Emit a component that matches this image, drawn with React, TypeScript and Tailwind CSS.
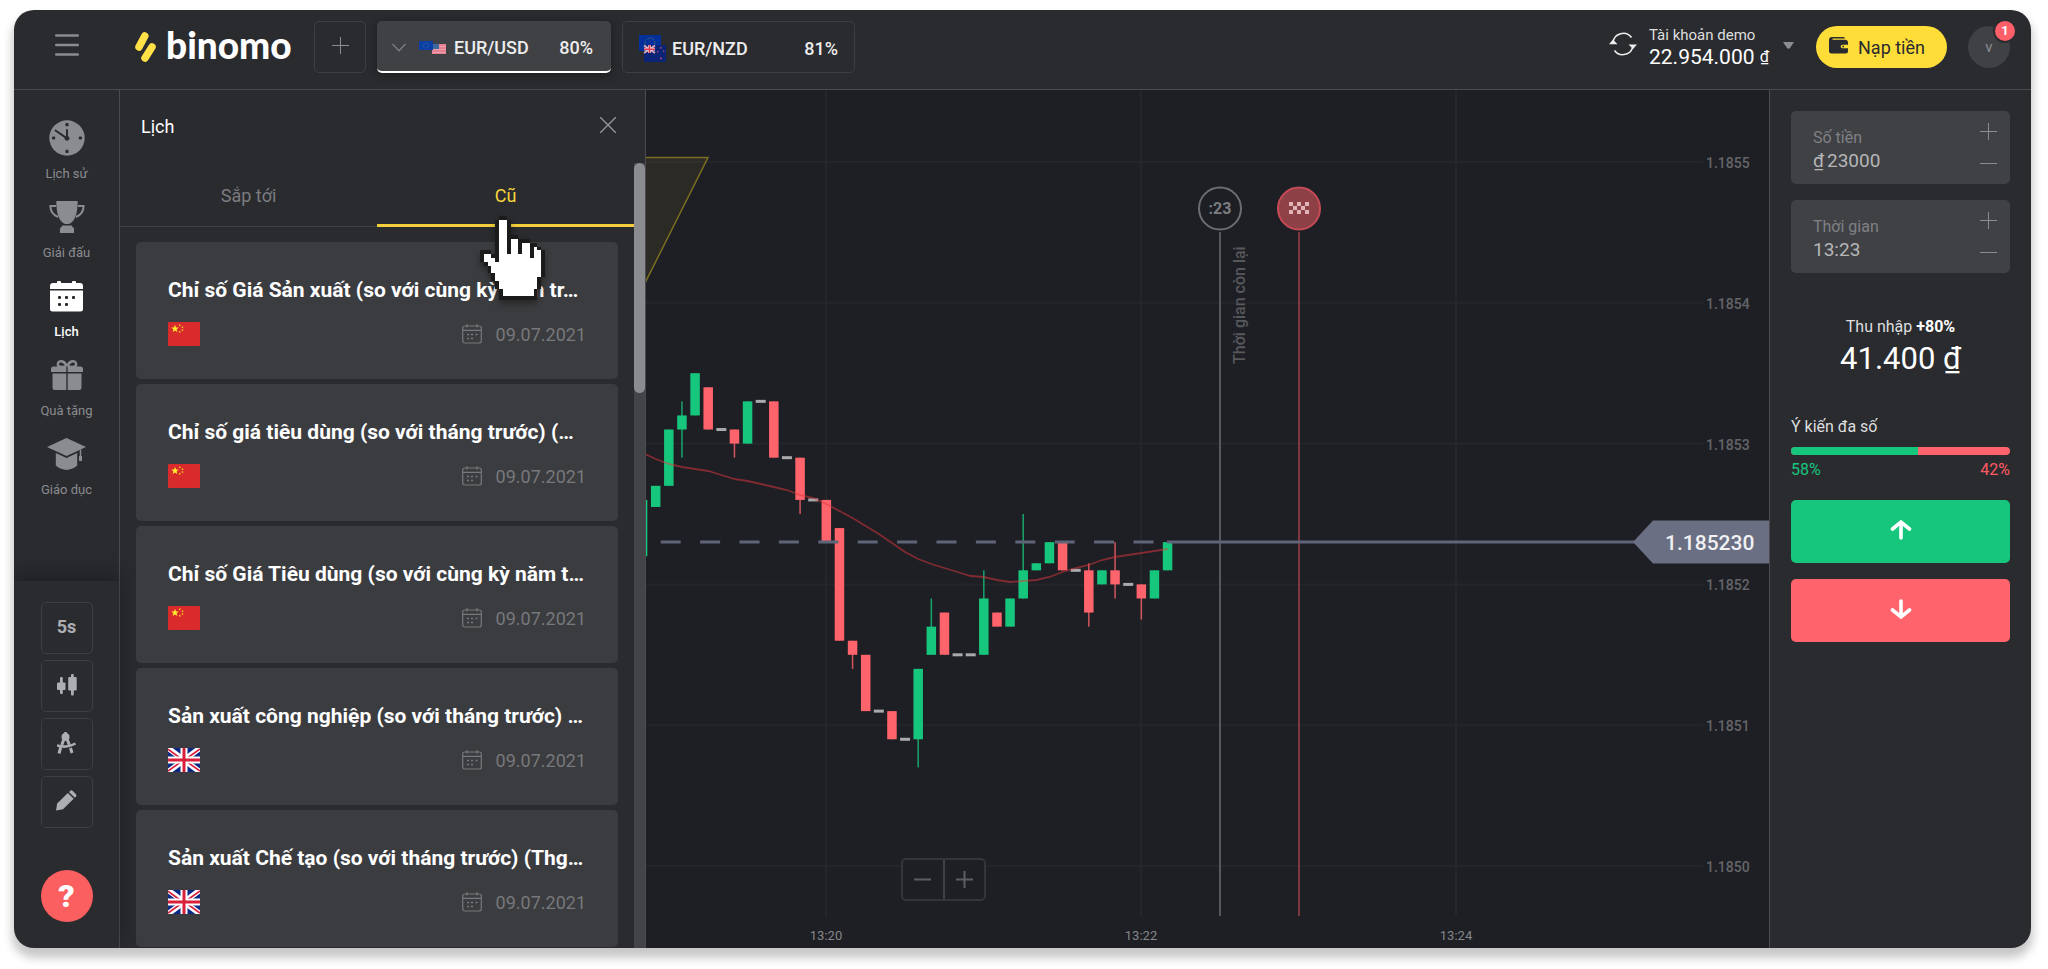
import { useState, type ReactNode } from "react";

type CalendarEvent = { title: string; flag: "cn" | "gb"; date: string };

const events: CalendarEvent[] = [
  { title: "Chỉ số Giá Sản xuất (so với cùng kỳ năm tr…", flag: "cn", date: "09.07.2021" },
  { title: "Chỉ số giá tiêu dùng (so với tháng trước) (…", flag: "cn", date: "09.07.2021" },
  { title: "Chỉ số Giá Tiêu dùng (so với cùng kỳ năm t…", flag: "cn", date: "09.07.2021" },
  { title: "Sản xuất công nghiệp (so với tháng trước) …", flag: "gb", date: "09.07.2021" },
  { title: "Sản xuất Chế tạo (so với tháng trước) (Thg…", flag: "gb", date: "09.07.2021" },
];

// [open, close, high, low] in points above 1.18500, one candle every 5 seconds
const candles: number[][] = [
  [22, 26, 26, 22],
  [25.5, 27, 27, 25.5],
  [27, 31, 31, 27],
  [31, 32, 33, 29],
  [32, 35, 35, 32],
  [34, 31, 34, 31],
  [31, 31, 31, 31],
  [31, 30, 31, 29],
  [30, 33, 33, 30],
  [33, 33, 33, 33],
  [33, 29, 33, 29],
  [29, 29, 29, 29],
  [29, 26, 29, 25],
  [26, 26, 26, 26],
  [26, 23, 26, 23],
  [24, 16, 24, 16],
  [16, 15, 16, 14],
  [15, 11, 15, 11],
  [11, 11, 11, 11],
  [11, 9, 11, 9],
  [9, 9, 9, 9],
  [9, 14, 14, 7],
  [15, 17, 19, 15],
  [18, 15, 18, 15],
  [15, 15, 15, 15],
  [15, 15, 15, 15],
  [15, 19, 21, 15],
  [18, 17, 18, 17],
  [17, 19, 19, 17],
  [19, 21, 25, 19],
  [21, 21.5, 21.5, 21],
  [21.5, 23, 23, 21.5],
  [23, 21, 23, 21],
  [21, 21, 21, 21],
  [21, 18, 21.5, 17],
  [20, 21, 21, 20],
  [21, 20, 23, 19],
  [20, 20, 20, 20],
  [20, 19, 20, 17.5],
  [19, 21, 21, 19],
  [21, 23, 23, 21],
];

const movingAverage = [
  363, 369, 374, 377, 379, 381, 385, 389, 391, 394, 397, 400, 405, 408, 414, 421, 428, 436, 444, 453, 462,
  469, 474, 478, 482, 486, 487, 490, 492, 491, 490, 487, 482, 478, 475, 470, 467, 465, 463, 461, 459,
];

const priceY = (points: number) => 776 - points * 14.08;
const candleX = (index: number) => 9.7 + (index - 1) * 13.125;

const cursorRows = [
  ".....XX..........",
  "....XooX.........",
  "....XooX.........",
  "....XooX.........",
  "....XooX.........",
  "....XooXXX.......",
  "....XooXooXXX....",
  "....XooXooXooXX..",
  "....XooXooXooXoX.",
  "XXX.XooXooXooXooX",
  "XooXXooooooooXooX",
  "XoooXoooooooooooX",
  ".XooooooooooooooX",
  "..XoooooooooooooX",
  "..XoooooooooooooX",
  "...XooooooooooooX",
  "...XoooooooooooX.",
  "....XooooooooooX.",
  "....XooooooooooX.",
  ".....XooooooooX..",
  ".....XooooooooX..",
  ".....XXXXXXXXXX..",
];

function HandCursor() {
  return (
    <svg
      viewBox="0 0 17 22"
      shapeRendering="crispEdges"
      aria-hidden="true"
      className="pointer-events-none absolute top-[126px] left-[360px] z-10 w-[65px] drop-shadow-[0_4px_3px_rgba(0,0,0,0.35)]"
    >
      {cursorRows.map((row, y) =>
        row.split("").map((cell, x) =>
          cell === "." ? null : (
            <rect key={`${x}-${y}`} x={x} y={y} width="1" height="1" fill={cell === "X" ? "#1b1b1c" : "#fff"} />
          )
        )
      )}
    </svg>
  );
}

function FlagCN() {
  return (
    <svg viewBox="0 0 32 24" className="h-6 w-8 rounded-[1px]" role="img" aria-label="CN">
      <rect width="32" height="24" fill="#d92b2b" />
      <path d="M7 2.8l1 2.7 2.8.1-2.2 1.7.8 2.8L7 8.500l-2.400 1.600.8-2.800L3.200 5.600 6 5.500z" fill="#ffee2e" />
      <g fill="#f6c62c">
        <rect x="11" y="2.500" width="1.500" height="1.500" />
        <rect x="13.700" y="4.500" width="1.500" height="1.500" />
        <rect x="13.700" y="7.300" width="1.500" height="1.500" />
        <rect x="11" y="9" width="1.500" height="1.500" />
      </g>
    </svg>
  );
}

function FlagGB() {
  return (
    <svg viewBox="0 0 32 24" className="h-6 w-8" role="img" aria-label="GB">
      <rect width="32" height="24" fill="#0a2a86" />
      <path d="M0 0L32 24M32 0L0 24" stroke="#fff" strokeWidth="5.500" />
      <path d="M0 1.200L12 10M20 14.500L32 23M32 1L20 9.500M12 14.500L0 23" stroke="#d9203a" strokeWidth="1.600" />
      <path d="M16 0V24M0 12H32" stroke="#fff" strokeWidth="7" />
      <path d="M16 0V24M0 12H32" stroke="#d9203a" strokeWidth="3" />
    </svg>
  );
}

function FlagsEurUsd() {
  return (
    <svg viewBox="0 0 27 14" className="h-[14px] w-[27px]" aria-hidden="true">
      <rect x="13" y="3" width="14" height="10" fill="#e77f92" />
      <path d="M13 5.500H27M13 8.500H27M13 11.500H27" stroke="#eba0ad" strokeWidth="1" />
      <rect x="13" y="3" width="7" height="5" fill="#3b6a9c" />
      <rect width="14" height="9" fill="#0b3fa6" />
      <circle cx="7" cy="4.500" r="2.600" fill="none" stroke="#3d6a9a" strokeWidth="1" strokeDasharray="1 1" />
    </svg>
  );
}

function FlagsEurNzd() {
  return (
    <svg viewBox="0 0 27 27" className="h-[27px] w-[27px]" aria-hidden="true">
      <rect width="22" height="16" fill="#04309c" />
      <circle cx="11" cy="8" r="5" fill="none" stroke="#5d7658" strokeWidth="1" strokeDasharray="1.300 1.300" />
      <rect x="5" y="10" width="22" height="17" fill="#0b2478" />
      <path d="M5 10.500L16 18M16 10.500L5 18" stroke="#dba9bb" strokeWidth="1.800" />
      <path d="M10.500 10V18M5 14.200H16" stroke="#f2dfe4" strokeWidth="2.800" />
      <path d="M10.500 10V18M5 14.200H16" stroke="#e0394f" strokeWidth="1.600" />
      <g fill="#b0486e">
        <rect x="21" y="12" width="1.600" height="1.600" />
        <rect x="18" y="16" width="1.400" height="1.400" />
        <rect x="24" y="15.500" width="1.400" height="1.400" />
        <rect x="21" y="22.500" width="1.800" height="1.800" />
      </g>
    </svg>
  );
}

function ClockIcon() {
  return (
    <svg viewBox="0 0 36 36" className="h-9 w-9" aria-hidden="true">
      <circle cx="18" cy="18" r="17.700" fill="currentColor" />
      <g fill="#2a2b2f">
        <rect x="16.400" y="3" width="3.200" height="3.200" rx="1" />
        <rect x="16.400" y="29.800" width="3.200" height="3.200" rx="1" />
        <rect x="3" y="16.400" width="3.200" height="3.200" rx="1" />
        <rect x="29.800" y="16.400" width="3.200" height="3.200" rx="1" />
        <circle cx="18" cy="18.300" r="2.400" />
      </g>
      <path d="M18 18V10M18 18.300L6.500 10.500" stroke="#2a2b2f" strokeWidth="2" strokeLinecap="round" />
    </svg>
  );
}

function TrophyIcon() {
  return (
    <svg viewBox="0 0 36 32" className="h-8 w-9" aria-hidden="true">
      <path d="M7.300 0H28.700C28.700 10 27 18 22.500 21.500C20 23.600 16 23.600 13.500 21.500C9 18 7.300 10 7.300 0Z" fill="currentColor" />
      <path d="M13.500 24.500H22.500L25 27.500V32H11V27.500Z" fill="currentColor" />
      <path d="M7 5H1.400C1.400 10 4 14 9 16M29 5H34.600C34.600 10 32 14 27 16" fill="none" stroke="currentColor" strokeWidth="2" />
    </svg>
  );
}

function CalendarIcon() {
  return (
    <svg viewBox="0 0 33 31" className="h-[31px] w-[33px]" aria-hidden="true">
      <path d="M7 2V1a1 1 0 0 1 1-1h2a1 1 0 0 1 1 1v1h11V1a1 1 0 0 1 1-1h2a1 1 0 0 1 1 1v1h4a3 3 0 0 1 3 3v3H0V5a3 3 0 0 1 3-3Z" fill="currentColor" />
      <path d="M0 9.500H33V28a2.500 2.500 0 0 1-2.500 2.500H2.500A2.500 2.500 0 0 1 0 28Z" fill="currentColor" />
      <g fill="#2a2b2f">
        <rect x="8" y="15" width="3" height="3" rx="1" />
        <rect x="15" y="15" width="3" height="3" rx="1" />
        <rect x="22" y="15" width="3" height="3" rx="1" />
        <rect x="8" y="22" width="3" height="3" rx="1" />
        <rect x="15" y="22" width="3" height="3" rx="1" />
      </g>
    </svg>
  );
}

function GiftIcon() {
  return (
    <svg viewBox="0 0 32 30" className="h-[30px] w-8" aria-hidden="true">
      <path d="M15 6.500C10 7.500 6.800 6.500 6.800 4.200C6.800 1.500 9.500.8 11.500 1.500C13.500 2.200 15 4.500 15.500 6.500M17 6.500C22 7.500 25.200 6.500 25.200 4.200C25.200 1.500 22.500.8 20.500 1.500C18.500 2.200 17 4.500 16.500 6.500" fill="none" stroke="currentColor" strokeWidth="2.400" />
      <path d="M0 12V9a2.500 2.500 0 0 1 2.500-2.500H15.300V12ZM16.700 12V6.500H29.500A2.500 2.500 0 0 1 32 9v3Z" fill="currentColor" />
      <path d="M1.500 13.500H15.300V30H4A2.500 2.500 0 0 1 1.500 27.500ZM16.700 13.500H30.500V27.500A2.500 2.500 0 0 1 28 30H16.700Z" fill="currentColor" />
    </svg>
  );
}

function EducationIcon() {
  return (
    <svg viewBox="0 0 39 32" className="h-8 w-[39px]" aria-hidden="true">
      <path d="M19.500 0L39 9L19.500 18L0 9Z" fill="currentColor" />
      <path d="M8.800 15L19.500 20L30.200 15V27.500C27 30.500 23 31.500 19.500 32C16 31.500 12 30.500 8.800 27.500Z" fill="currentColor" />
      <path d="M33.500 11.500V19" stroke="currentColor" strokeWidth="1.500" />
      <rect x="32" y="18" width="3" height="5" fill="currentColor" />
    </svg>
  );
}

function SmallCalendarIcon() {
  return (
    <svg viewBox="0 0 20 20" className="h-5 w-5" fill="none" stroke="currentColor" aria-hidden="true">
      <rect x="0.700" y="2" width="18.600" height="17" rx="2" strokeWidth="1.200" />
      <path d="M1 6.300H19M5 0V3.500M15 0V3.500" strokeWidth="1.200" />
      <path d="M5 10.500H7M9 10.500H11M13.500 10.500H15.500M5 14.500H7M9 14.500H11" strokeWidth="1.600" />
    </svg>
  );
}

function Plus({ className }: { className: string }) {
  return (
    <svg viewBox="0 0 17 17" className={className} stroke="currentColor" aria-hidden="true">
      <path d="M8.500 0V17M0 8.500H17" />
    </svg>
  );
}

function Minus({ className }: { className: string }) {
  return (
    <svg viewBox="0 0 17 17" className={className} stroke="currentColor" aria-hidden="true">
      <path d="M0 8.500H17" />
    </svg>
  );
}

const navItems: { label: string; icon: ReactNode; active?: boolean }[] = [
  { label: "Lịch sử", icon: <ClockIcon /> },
  { label: "Giải đấu", icon: <TrophyIcon /> },
  { label: "Lịch", icon: <CalendarIcon />, active: true },
  { label: "Quà tặng", icon: <GiftIcon /> },
  { label: "Giáo dục", icon: <EducationIcon /> },
];

function Header() {
  return (
    <header className="flex h-20 shrink-0 items-center border-b border-[#4a4b4e] pr-[21px] pb-[5px]">
      <div className="flex w-[105px] shrink-0 justify-center">
        <button type="button" aria-label="Menu" className="mb-1 text-[#8b8c90]">
          <svg viewBox="0 0 24 22" className="h-[22px] w-6" stroke="currentColor" strokeWidth="2.400" strokeLinecap="round" aria-hidden="true">
            <path d="M1.200 1.500H22.800M1.200 11H22.800M1.200 20.500H22.800" />
          </svg>
        </button>
      </div>

      <a href="#" className="ml-4 flex w-[179px] shrink-0 items-center gap-[10px]">
        <svg viewBox="0 0 21 30" className="h-[30px] w-[21px]" stroke="#ffe047" strokeWidth="7.500" strokeLinecap="round" aria-hidden="true">
          <path d="M9.800 4L4 15M17 15L10 26" />
        </svg>
        <span className="mb-1 font-['Lato'] text-[37px] leading-[38px] font-black text-white">binomo</span>
      </a>

      <div className="flex gap-[11px]">
        <button type="button" aria-label="Thêm" className="flex h-[52px] w-[52px] items-center justify-center rounded-[5px] border border-[#3d3e42] pb-1 text-[#8b8c90]">
          <Plus className="h-[17px] w-[17px]" />
        </button>
        <button type="button" className="flex h-[52px] w-[234px] items-center overflow-hidden rounded-[5px] border-b-2 border-white bg-[#404144] pt-[3px] pr-[18px] pl-[15px] text-[18px] font-medium text-[#ededee] shadow-[0_2px_10px_rgba(0,0,0,0.35)]">
          <svg viewBox="0 0 14 9" className="h-[9px] w-[14px]" fill="none" stroke="#7b7c80" strokeWidth="1.500" aria-hidden="true">
            <path d="M.5 1L7 7.700L13.500 1" />
          </svg>
          <span className="ml-[13px] flex w-[35px]">
            <FlagsEurUsd />
          </span>
          EUR/USD
          <span className="ml-auto">80%</span>
        </button>
        <button type="button" className="flex h-[52px] w-[233px] items-center rounded-[5px] border border-[#3d3e42] px-4 pt-[3px] text-[18px] font-medium text-[#ededee]">
          <span className="flex w-[33px]">
            <FlagsEurNzd />
          </span>
          EUR/NZD
          <span className="ml-auto">81%</span>
        </button>
      </div>

      <div className="ml-auto flex items-center">
        <button type="button" aria-label="Làm mới" className="mr-3 mb-[6px] text-[#ededee]">
          <svg viewBox="0 0 28 24" className="h-6 w-7" fill="none" stroke="currentColor" strokeWidth="1.600" aria-hidden="true">
            <path d="M4 10.500A10.300 10.300 0 0 1 22.500 5.500M24 13.500A10.300 10.300 0 0 1 5.500 18.500" />
            <path d="M0 12.300L4 7.500L8.500 12.300Z" fill="currentColor" stroke="none" />
            <path d="M19.500 12.500L24 17L28 12.500Z" fill="currentColor" stroke="none" />
          </svg>
        </button>
        <button type="button" className="flex items-center text-left">
          <span className="flex w-[134px] flex-col">
            <span className="text-[15px] leading-5 text-[#dededf]">Tài khoản demo</span>
            <span className="text-[21px] leading-6 text-white">
              22.954.000 <span className="align-[2px] text-[16px] leading-4">₫</span>
            </span>
          </span>
          <svg viewBox="0 0 11 7" className="mb-1 h-[7px] w-[11px]" fill="#8b8c90" aria-hidden="true">
            <path d="M0 0H11L7 6Q5.500 7.500 4 6Z" />
          </svg>
        </button>
        <button type="button" className="ml-[22px] flex h-[42px] w-[131px] items-center gap-[10px] rounded-full bg-[#ffdd38] pl-[13px] text-[18px] text-[#2a2b2f]">
          <svg viewBox="0 0 19 17" className="mb-1 h-[17px] w-[19px]" aria-hidden="true">
            <path d="M3 0H14.500A1.500 1.500 0 0 1 16 1.500H3.500V2.700H16A3 3 0 0 1 19 5.500V14A2.500 2.500 0 0 1 16.500 16.500H2.500A2.500 2.500 0 0 1 0 14V3A3 3 0 0 1 3 0Z" fill="#2a2b2f" />
            <path d="M13.500 7.700H19V11.300H13.500A1.800 1.800 0 0 1 13.500 7.700Z" fill="#ffdd38" />
            <circle cx="14.200" cy="9.500" r="0.900" fill="#2a2b2f" />
          </svg>
          Nạp tiền
        </button>
        <button type="button" className="relative ml-[21px] flex h-[42px] w-[42px] items-center justify-center rounded-full bg-[#404144] text-[15px] text-[#8b8c90]">
          v
          <span className="absolute -top-[7px] -right-[7px] flex h-6 w-6 items-center justify-center rounded-full border-2 border-[#2a2b2f] bg-[#ff5f69] text-[13px] font-bold text-white">
            1
          </span>
        </button>
      </div>
    </header>
  );
}

function ToolButton({ label, children }: { label: string; children: ReactNode }) {
  return (
    <button
      type="button"
      aria-label={label}
      className="flex h-[52px] w-[52px] items-center justify-center rounded-[5px] border border-[#3d3e42] pb-[3px] text-[18px] font-bold text-[#adaeb1]"
    >
      {children}
    </button>
  );
}

function Sidebar() {
  return (
    <aside className="flex w-[106px] shrink-0 flex-col border-r border-[#4a4b4e]">
      <nav className="flex flex-1 flex-col gap-[13px] pt-7">
        {navItems.map((item) => (
          <a
            key={item.label}
            href="#"
            className={`flex flex-col items-center gap-[6px] text-[13px] leading-5 ${item.active ? "font-medium text-white" : "text-[#8b8c90]"}`}
          >
            <span className="flex h-10 items-center">{item.icon}</span>
            {item.label}
          </a>
        ))}
      </nav>

      <div className="flex flex-col items-center gap-[6px] pt-[21px] pb-[26px] shadow-[0_-6px_20px_rgba(0,0,0,0.3)]">
        <ToolButton label="5s">5s</ToolButton>
        <ToolButton label="Loại biểu đồ">
          <svg viewBox="0 0 20 22" className="h-[22px] w-5" fill="currentColor" aria-hidden="true">
            <rect x="0" y="8.500" width="8.500" height="7.500" rx="1" />
            <rect x="3" y="3" width="2.800" height="17" rx="1" />
            <rect x="11.200" y="3" width="8.500" height="13.500" rx="1" />
            <rect x="14" y="0" width="2.800" height="21.500" rx="1" />
          </svg>
        </ToolButton>
        <ToolButton label="Chỉ báo">
          <svg viewBox="0 0 20 22" className="h-[22px] w-5" fill="none" stroke="currentColor" aria-hidden="true">
            <circle cx="8.500" cy="5" r="4" fill="currentColor" stroke="none" />
            <path d="M8.500 0V3" strokeWidth="2.500" />
            <path d="M6.500 8L4.800 13M3.800 15L2 21.500M10.500 8L12.300 13M13.500 16L15 21" strokeWidth="3" />
            <path d="M0 13.500Q10 16.500 18.500 11.500" strokeWidth="2.500" />
          </svg>
        </ToolButton>
        <ToolButton label="Vẽ">
          <svg viewBox="0 0 21 21" className="h-[21px] w-[21px]" fill="currentColor" aria-hidden="true">
            <path d="M0 20.500L1.200 13.500L11.800 3L17.700 8.800L7 19.300Z" />
            <path d="M13 1.900L14.300.7Q15.300-.2 16.500.7L20 4.200Q20.900 5.300 20 6.500L18.800 7.700Z" />
          </svg>
        </ToolButton>
        <button type="button" aria-label="Trợ giúp" className="mt-9 flex h-[52px] w-[52px] items-center justify-center rounded-full bg-[#fb5f60] text-[32px] font-black text-white">
          ?
        </button>
      </div>
    </aside>
  );
}

function CalendarPanel() {
  const [tab, setTab] = useState("old");

  return (
    <section className="relative flex w-[526px] shrink-0 flex-col border-r border-[#4a4b4e]" aria-labelledby="calendar-title">
      <div className="flex h-[73px] shrink-0 items-center justify-between pr-[29px] pl-[21px]">
        <h2 id="calendar-title" className="text-[18px] text-white">
          Lịch
        </h2>
        <button type="button" aria-label="Đóng" className="mb-[3px] text-[#97989c]">
          <svg viewBox="0 0 16 16" className="h-4 w-4" stroke="currentColor" strokeWidth="1.300" aria-hidden="true">
            <path d="M0 0L16 16M16 0L0 16" />
          </svg>
        </button>
      </div>

      <div className="flex min-h-0 flex-1">
        <div className="flex-1 overflow-hidden">
          <div className="flex h-16" role="tablist">
            {[
              { id: "next", label: "Sắp tới" },
              { id: "old", label: "Cũ" },
            ].map((item) => (
              <button
                key={item.id}
                type="button"
                role="tab"
                aria-selected={tab === item.id}
                onClick={() => setTab(item.id)}
                className={`flex-1 text-[18px] ${tab === item.id ? "border-b-3 border-[#f2cf3a] pt-[3px] text-[#f6d53c]" : "border-b border-[#404144] pt-px text-[#7b7c80]"}`}
              >
                {item.label}
              </button>
            ))}
          </div>

          <ul className="flex flex-col gap-[5px] px-4 pt-[15px]">
            {events.map((event) => (
              <li key={event.title} className="rounded-[5px] bg-[#3b3c3f] px-8 pt-8 pb-[33px]">
                <h3 className="text-[21px] leading-8 font-bold whitespace-nowrap text-white">{event.title}</h3>
                <div className="mt-4 flex h-6 items-center justify-between">
                  {event.flag === "cn" ? <FlagCN /> : <FlagGB />}
                  <span className="flex items-center gap-[14px] text-[18px] text-[#77787b]">
                    <SmallCalendarIcon />
                    {event.date}
                  </span>
                </div>
              </li>
            ))}
          </ul>
        </div>
        <div className="w-[11px] shrink-0 bg-[#434447]">
          <div className="h-[230px] rounded-full bg-[#8b8c90]" />
        </div>
      </div>

      <HandCursor />
    </section>
  );
}

function Chart() {
  return (
    <main className="relative min-w-0 flex-1 bg-[#1e1f24]">
      <svg viewBox="0 0 1123 858" preserveAspectRatio="xMaxYMin slice" className="h-full w-full" role="img" aria-label="EUR/USD">
        {/* grid */}
        {[50, 40, 30, 20, 10, 0].map((points) => (
          <g key={points}>
            <path d={`M0 ${priceY(points)}H1057`} stroke="#25262a" strokeWidth="2" />
            <text x="1060" y={priceY(points) + 6} fill="#646569" fontSize="14" fontWeight="500">
              {(1.185 + points / 100000).toFixed(4)}
            </text>
          </g>
        ))}
        {["13:20", "13:22", "13:24"].map((time, i) => (
          <g key={time}>
            <path d={`M${180 + i * 315} 0V826`} stroke="#25262a" strokeWidth="2" />
            <text x={180 + i * 315} y="850" fill="#85868a" fontSize="13" textAnchor="middle">
              {time}
            </text>
          </g>
        ))}

        <path d="M-1 67.500H62L-1 193Z" fill="#ffe047" fillOpacity="0.060" stroke="#7a6e22" strokeWidth="1.500" />

        {/* expiry markers */}
        <path d="M574 142V826" stroke="#57585c" strokeWidth="2" />
        <circle cx="574" cy="118.500" r="21" fill="none" stroke="#6c6d71" strokeWidth="2" />
        <text x="574" y="124" fill="#7b7c80" fontSize="16" fontWeight="700" textAnchor="middle">
          :23
        </text>
        <text transform="translate(599 274) rotate(-90)" fill="#57585c" fontSize="16" fontWeight="500">
          Thời gian còn lại
        </text>
        <path d="M653 142V826" stroke="#7d3841" strokeWidth="2" />
        <circle cx="653" cy="118.500" r="21" fill="#8e4047" stroke="#c64b56" strokeWidth="2" />
        <path
          d="M643 112h4v4h-4zM651 112h4v4h-4zM659 112h4v4h-4zM647 116h4v4h-4zM655 116h4v4h-4zM643 120h4v4h-4zM651 120h4v4h-4zM659 120h4v4h-4z"
          fill="#dfb3b7"
        />

        {candles.map(([open, close, high, low], i) => {
          const x = candleX(i);
          if (open === close) {
            return <rect key={i} x={x - 5} y={priceY(open) - 1.5} width="10" height="3" fill="#a9aaac" />;
          }
          const color = close > open ? "#17c67d" : "#ff636b";
          return (
            <g key={i} fill={color}>
              <rect x={x - 0.75} y={priceY(high)} width="1.500" height={priceY(low) - priceY(high)} fillOpacity="0.800" />
              <rect x={x - 4.75} y={priceY(Math.max(open, close))} width="9.500" height={Math.abs(open - close) * 14.08} />
            </g>
          );
        })}

        {/* current price */}
        <path d="M14.700 452H521" stroke="#5f6478" strokeWidth="3" strokeDasharray="20 19.400" />
        <path d="M521 452H990" stroke="#5f6478" strokeWidth="3" />
        <polyline
          points={movingAverage.map((y, i) => `${candleX(i)},${y}`).join(" ")}
          fill="none"
          stroke="#e0383e"
          strokeOpacity="0.500"
          strokeWidth="1.800"
        />
        <path d="M987 452L1007 430.500H1123V473.500H1007Z" fill="#6a6f83" />
        <text x="1019" y="459.500" fill="#f1f1f3" fontSize="21" fontWeight="500">
          1.185230
        </text>
      </svg>

      <div className="absolute bottom-[47px] left-[255px] flex h-[43px] w-[85px] divide-x-2 divide-[#404144] rounded-[5px] border-2 border-[#343539] bg-[#1e1f24] text-[#5d5e62]">
        <button type="button" aria-label="Thu nhỏ" className="flex flex-1 items-center justify-center">
          <Minus className="h-[17px] w-[17px] stroke-2" />
        </button>
        <button type="button" aria-label="Phóng to" className="flex flex-1 items-center justify-center">
          <Plus className="h-[17px] w-[17px] stroke-2" />
        </button>
      </div>
    </main>
  );
}

type StepFieldProps = {
  id: string;
  label: string;
  prefix?: string;
  value: string;
  onChange: (value: string) => void;
};

function StepField({ id, label, prefix, value, onChange }: StepFieldProps) {
  return (
    <div className="flex h-[73px] rounded-[5px] bg-[#404144] pr-[6px] pl-[22px]">
      <div className="min-w-0 flex-1 pt-4">
        <label htmlFor={id} className="block text-[16px] leading-[22px] text-[#7f8084]">
          {label}
        </label>
        <div className="flex gap-[3px] text-[19px] leading-6 text-[#b5b6b8]">
          {prefix && <span>{prefix}</span>}
          <input id={id} value={value} onChange={(e) => onChange(e.target.value)} className="w-full min-w-0 bg-transparent outline-none" />
        </div>
      </div>
      <div className="flex flex-col pt-1 text-[#8b8c90]">
        <button type="button" aria-label={`${label} +`} className="flex h-8 w-8 items-center justify-center">
          <Plus className="h-[17px] w-[17px]" />
        </button>
        <button type="button" aria-label={`${label} -`} className="flex h-8 w-8 items-center justify-center">
          <Minus className="h-[17px] w-[17px]" />
        </button>
      </div>
    </div>
  );
}

function TradePanel() {
  const [amount, setAmount] = useState("23000");
  const [time, setTime] = useState("13:23");
  const up = 58;

  return (
    <aside className="flex w-[262px] shrink-0 flex-col border-l border-[#4a4b4e] px-[21px] pt-[21px]">
      <div className="flex flex-col gap-4">
        <StepField id="amount" label="Số tiền" prefix="₫" value={amount} onChange={setAmount} />
        <StepField id="time" label="Thời gian" value={time} onChange={setTime} />
      </div>

      <div className="mt-[42px] text-center">
        <p className="text-[16px] leading-6 text-[#dededf]">
          Thu nhập <span className="font-bold text-white">+80%</span>
        </p>
        <p className="text-[31px] leading-10 text-white">41.400 ₫</p>
      </div>

      <p className="mt-9 text-[16px] leading-6 text-[#dededf]">Ý kiến đa số</p>
      <div className="mt-2 flex h-2 overflow-hidden rounded-full bg-[#ff636b]">
        <div className="bg-[#17c67d]" style={{ width: `${up}%` }} />
      </div>
      <div className="mt-[5px] flex justify-between text-[16px] leading-5">
        <span className="text-[#17c67d]">{up}%</span>
        <span className="text-[#ff5a63]">{100 - up}%</span>
      </div>

      <div className="mt-5 flex flex-col gap-4 text-white">
        <button type="button" aria-label="Tăng" className="flex h-[63px] items-center justify-center rounded-[5px] bg-[#17c67d] pb-1">
          <svg viewBox="0 0 22 22" className="h-[22px] w-[22px]" fill="none" stroke="currentColor" strokeWidth="3.600" strokeLinecap="round" aria-hidden="true">
            <path d="M11 3V19M2.500 10L11 3L19.500 10" />
          </svg>
        </button>
        <button type="button" aria-label="Giảm" className="flex h-[63px] items-center justify-center rounded-[5px] bg-[#ff636b] pb-1">
          <svg viewBox="0 0 22 22" className="h-[22px] w-[22px]" fill="none" stroke="currentColor" strokeWidth="3.600" strokeLinecap="round" aria-hidden="true">
            <path d="M11 3V19M2.500 12L11 19L19.500 12" />
          </svg>
        </button>
      </div>
    </aside>
  );
}

export default function App() {
  return (
    <div className="flex h-screen bg-white pt-[10px] pr-[17px] pb-[21px] pl-[14px] font-['Roboto',sans-serif]">
      <div className="flex min-w-0 flex-1 flex-col overflow-hidden rounded-[20px] bg-[#2a2b2f] shadow-[0_8px_10px_2px_rgba(0,0,0,0.22)]">
        <Header />
        <div className="flex min-h-0 flex-1">
          <Sidebar />
          <CalendarPanel />
          <Chart />
          <TradePanel />
        </div>
      </div>
    </div>
  );
}
